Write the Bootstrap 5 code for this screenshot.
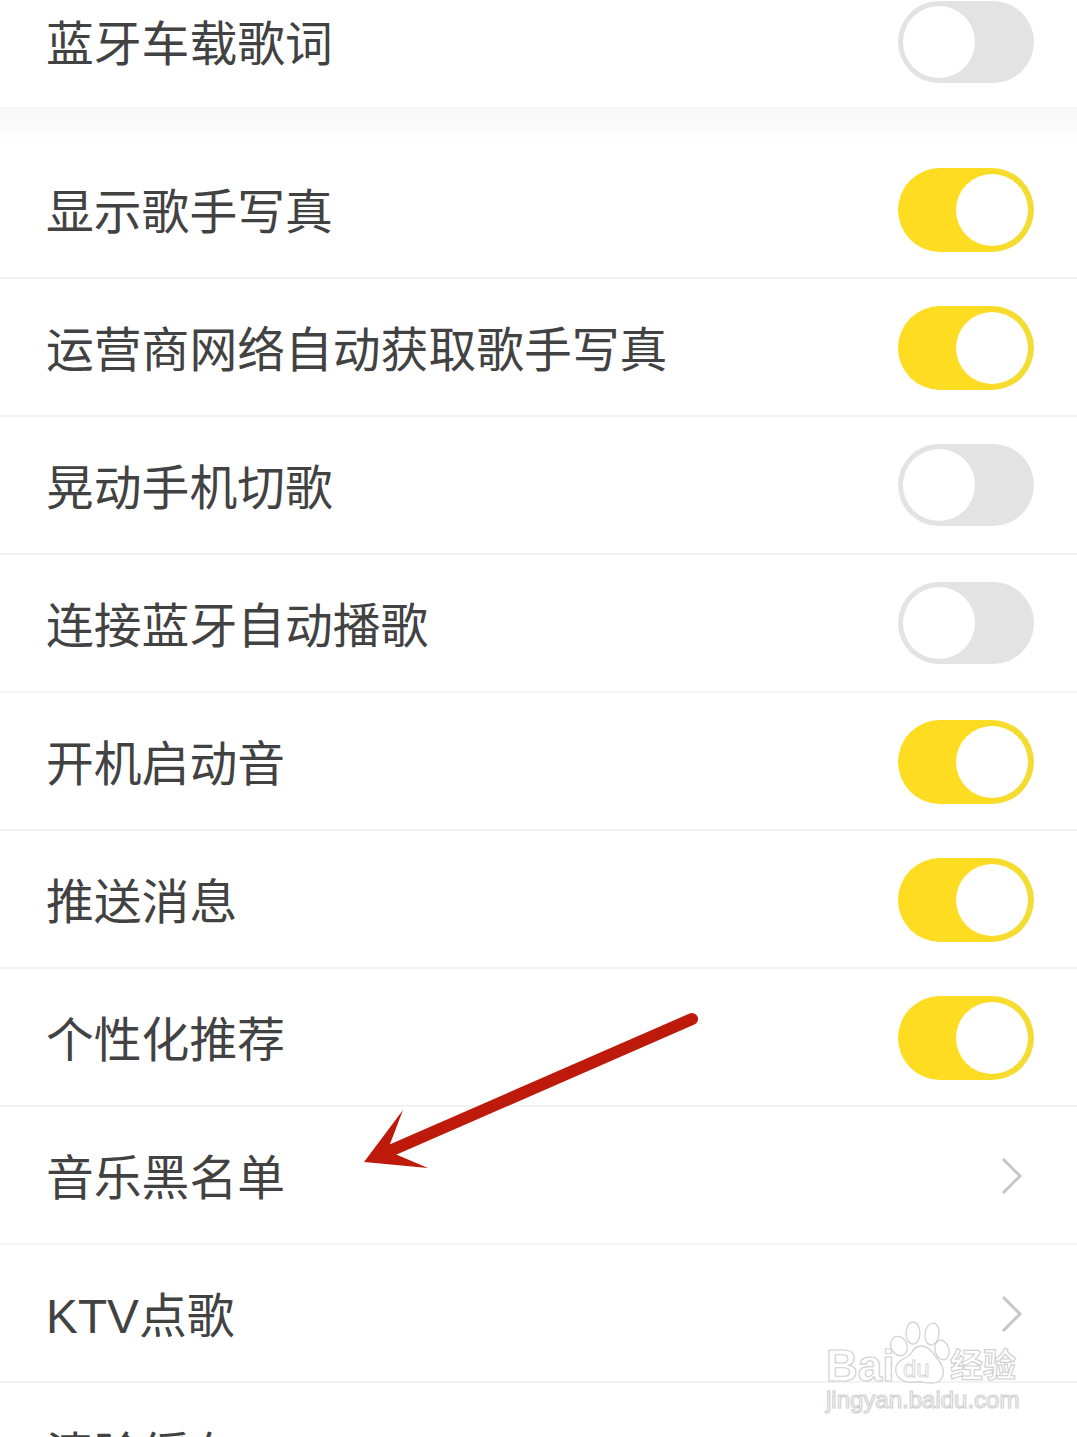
<!DOCTYPE html>
<html lang="zh">
<head>
    <meta charset="utf-8">
    <title>设置</title>
    <link rel="stylesheet" href="https://cdn.jsdelivr.net/npm/bootstrap@5.3.0/dist/css/bootstrap.min.css">
    <style>
        body {
            background: #fff;
            overflow: hidden;
            height: 1437px;
            position: relative;
        }
        .set-list .list-group-item {
            height: 138px;
            padding: 0 43px 0 46px;
            border-color: #f3f3f3;
            border-width: 0 0 2px;
            color: #424242;
            font-family: "Liberation Sans", "Noto Sans CJK SC", sans-serif;
            font-size: 47.8px;
            font-weight: 400;
            line-height: 1;
        }
        .set-list .first-row {
            height: 109px;
            padding-bottom: 22px;
            border-color: #f6f6f6;
        }
        .set-gap {
            height: 32px;
            background: linear-gradient(#f8f8f8, #fbfbfb 70%, #fff);
        }
        .row-text {
            padding-top: 8px;
        }
        .first-row .row-text {
            padding-top: 5px;
        }
        .sw {
            display: block;
            width: 136px;
            height: 82px;
            border-radius: 41px;
            background: #e3e3e3;
            position: relative;
            flex-shrink: 0;
        }
        .first-row .sw {
            margin-bottom: 2px;
        }
        .sw::after {
            content: "";
            position: absolute;
            top: 5px;
            left: 5px;
            width: 72px;
            height: 72px;
            border-radius: 50%;
            background: #fff;
        }
        .sw.on {
            height: 84px;
            border-radius: 42px;
            background: linear-gradient(90deg, #fddc21 55%, #f1dc38);
            margin-top: 2px;
        }
        .sw.on::after {
            top: 6px;
            left: auto;
            right: 6px;
        }
        .chev {
            width: 24px;
            height: 38px;
            margin-right: 10px;
            margin-top: 2px;
            flex-shrink: 0;
        }
        .red-arrow {
            position: absolute;
            left: 0;
            top: 0;
            width: 1077px;
            height: 1437px;
            pointer-events: none;
        }
        .wm-a, .wm-b {
            position: absolute;
            color: rgba(255, 255, 255, .9);
            -webkit-text-stroke: 1.2px #d2d2d2;
            white-space: nowrap;
            line-height: 1;
        }
        .wm-a {
            font-family: "Liberation Sans", "Noto Sans CJK SC", sans-serif;
            font-weight: 700;
            font-size: 44px;
        }
        .wm-b {
            left: 826px;
            top: 1388px;
            font-family: "Liberation Sans", sans-serif;
            font-size: 24px;
        }
        .wm-bai { left: 826px; top: 1344px; }
        .wm-jy { left: 950px; top: 1349px; font-size: 33px; }
    </style>
</head>
<body>
    <div class="list-group list-group-flush set-list">
        <div class="list-group-item first-row d-flex justify-content-between align-items-center">
            <span class="row-text">蓝牙车载歌词</span><span class="sw"></span>
        </div>
        <div class="set-gap"></div>
        <div class="list-group-item d-flex justify-content-between align-items-center">
            <span class="row-text">显示歌手写真</span><span class="sw on"></span>
        </div>
        <div class="list-group-item d-flex justify-content-between align-items-center">
            <span class="row-text">运营商网络自动获取歌手写真</span><span class="sw on"></span>
        </div>
        <div class="list-group-item d-flex justify-content-between align-items-center">
            <span class="row-text">晃动手机切歌</span><span class="sw"></span>
        </div>
        <div class="list-group-item d-flex justify-content-between align-items-center">
            <span class="row-text">连接蓝牙自动播歌</span><span class="sw"></span>
        </div>
        <div class="list-group-item d-flex justify-content-between align-items-center">
            <span class="row-text">开机启动音</span><span class="sw on"></span>
        </div>
        <div class="list-group-item d-flex justify-content-between align-items-center">
            <span class="row-text">推送消息</span><span class="sw on"></span>
        </div>
        <div class="list-group-item d-flex justify-content-between align-items-center">
            <span class="row-text">个性化推荐</span><span class="sw on"></span>
        </div>
        <div class="list-group-item d-flex justify-content-between align-items-center">
            <span class="row-text">音乐黑名单</span>
            <svg class="chev" viewBox="0 0 24 38"><path d="M3 2 L20 19 L3 36" fill="none" stroke="#c6c6c6" stroke-width="3"/></svg>
        </div>
        <div class="list-group-item d-flex justify-content-between align-items-center">
            <span class="row-text">KTV点歌</span>
            <svg class="chev" viewBox="0 0 24 38"><path d="M3 2 L20 19 L3 36" fill="none" stroke="#c6c6c6" stroke-width="3"/></svg>
        </div>
        <div class="list-group-item d-flex justify-content-between align-items-center">
            <span class="row-text">清除缓存</span>
        </div>
    </div>

    <!-- 红色箭头 -->
    <svg class="red-arrow" viewBox="0 0 1077 1437">
        <path d="M692 1019 L392 1150" stroke="#bd1a0b" stroke-width="12" stroke-linecap="round" fill="none"/>
        <polygon points="364,1162 403,1110 390,1144 395,1154 428,1168" fill="#bd1a0b"/>
    </svg>

    <!-- 百度经验水印 -->
    <span class="wm-a wm-bai">Bai</span>
    <span class="wm-a wm-jy">经验</span>
    <span class="wm-b">jingyan.baidu.com</span>
    <svg class="red-arrow" viewBox="0 0 1077 1437">
        <g fill="rgba(255,255,255,.8)" stroke="#d2d2d2" stroke-width="1.3">
            <ellipse cx="899" cy="1346" rx="8" ry="10" transform="rotate(-25 899 1346)"/>
            <ellipse cx="913" cy="1333" rx="7" ry="11"/>
            <ellipse cx="932" cy="1334" rx="7" ry="11" transform="rotate(8 932 1334)"/>
            <ellipse cx="942" cy="1350" rx="7" ry="10" transform="rotate(-15 942 1350)"/>
            <path d="M921 1346 C930 1346 934 1355 939 1361 C946 1370 945 1383 932 1383 C925 1383 921 1381 916 1382 C904 1384 894 1378 896 1367 C897 1359 908 1359 912 1352 C914 1348 917 1346 921 1346 Z"/>
        </g>
        <text x="903" y="1377" font-family="Liberation Sans, sans-serif" font-size="24" fill="#fff" stroke="#d2d2d2" stroke-width=".8">du</text>
    </svg>

    <script src="https://cdn.jsdelivr.net/npm/bootstrap@5.3.0/dist/js/bootstrap.bundle.min.js"></script>
</body>
</html>
